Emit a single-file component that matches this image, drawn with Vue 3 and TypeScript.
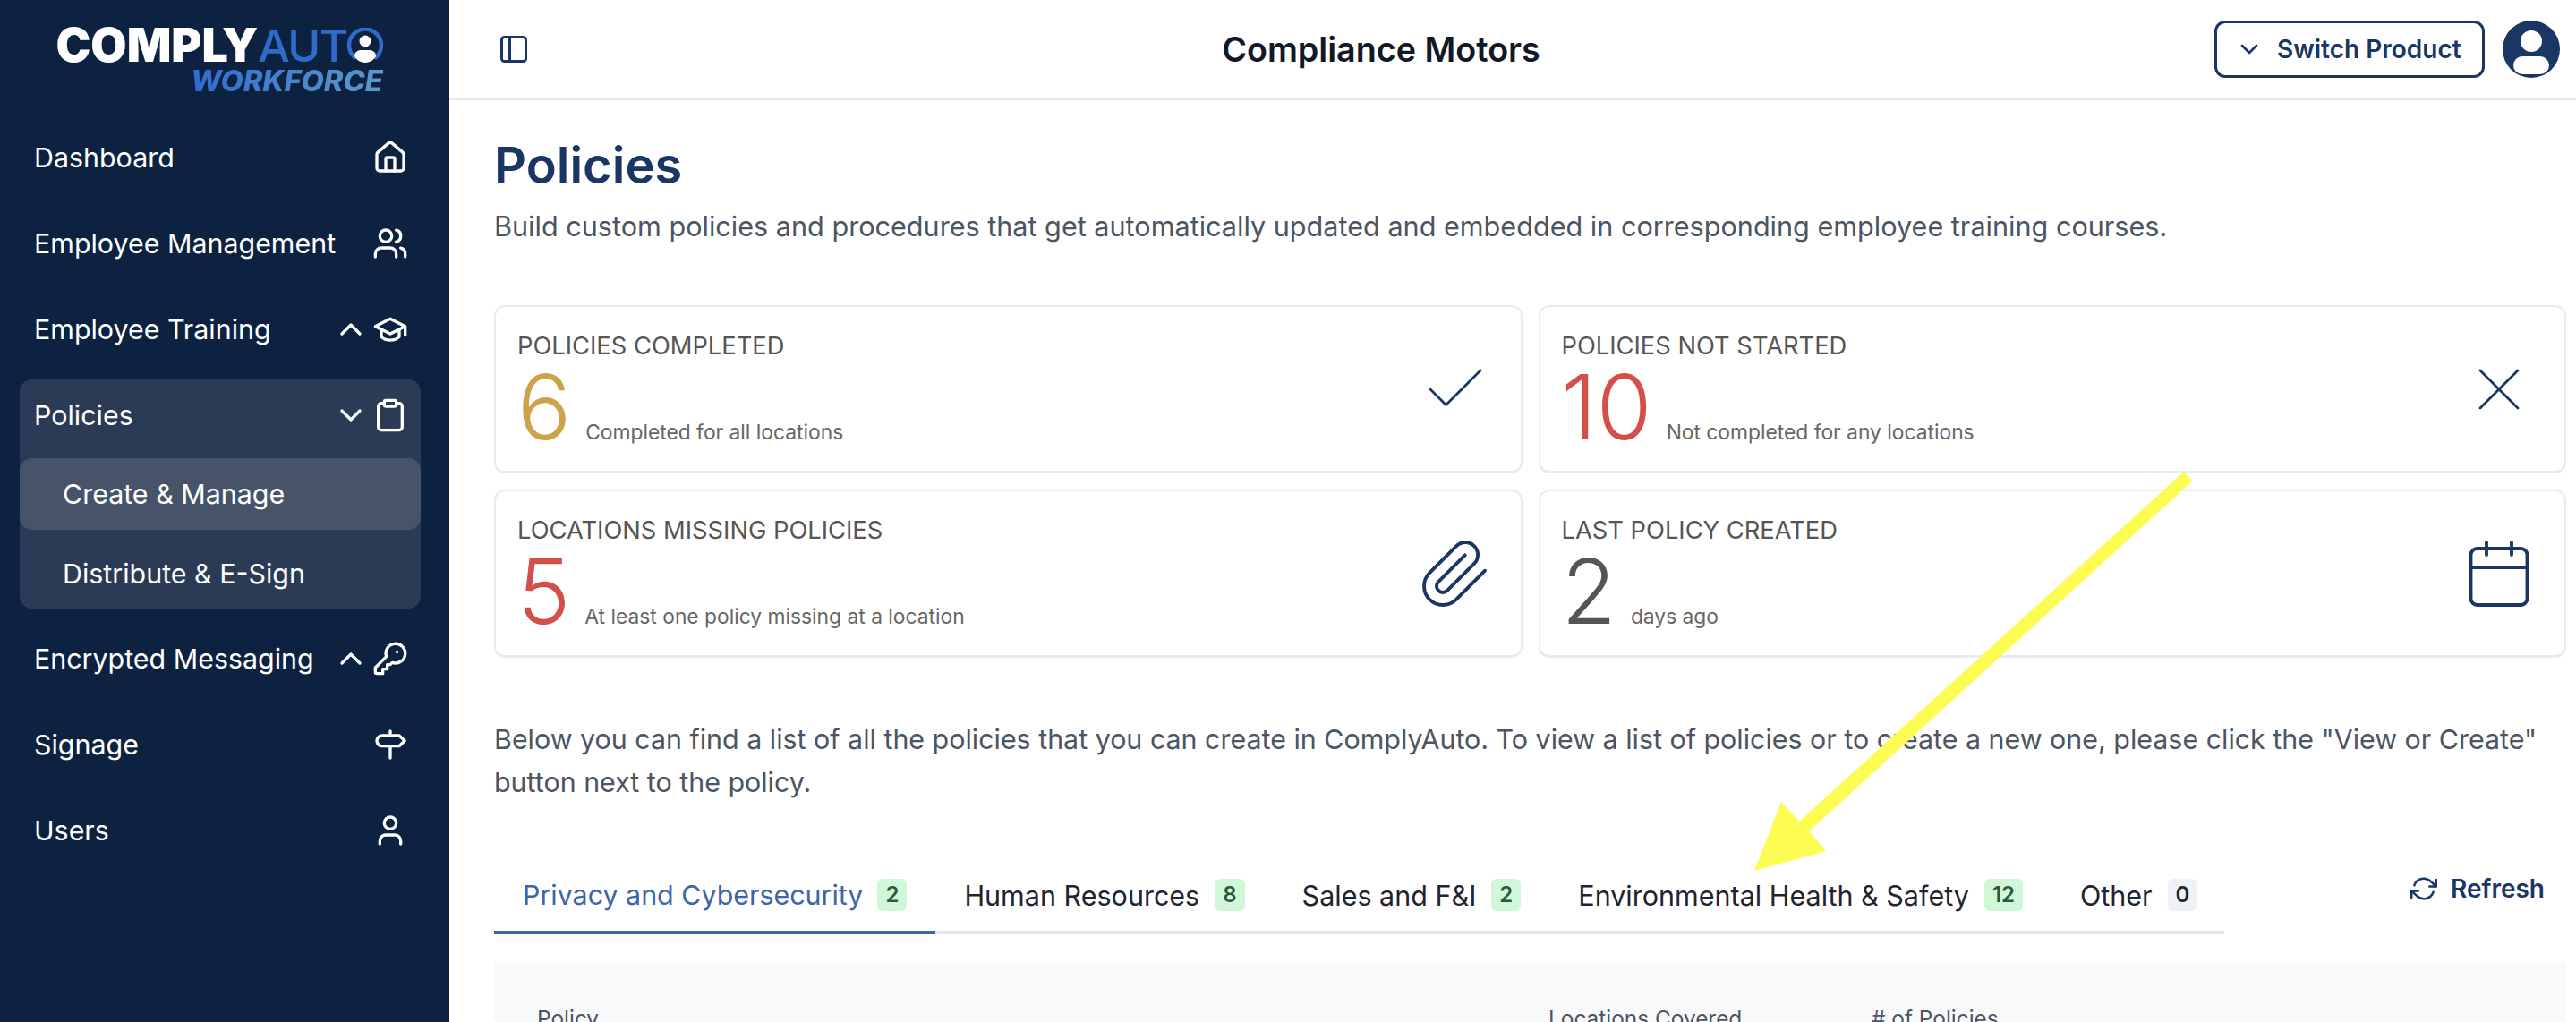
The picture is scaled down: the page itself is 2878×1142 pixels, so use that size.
<script setup lang="ts">
type NavItem = {
  label: string
  icon: string
  chevron?: 'up' | 'down'
  children?: { label: string; active?: boolean }[]
}

type StatCard = {
  title: string
  value: string
  note: string
  tone: string
  icon: string
  stroke: number
}

const icons: Record<string, string[]> = {
  home: [
    'M15 21v-8a1 1 0 0 0-1-1h-4a1 1 0 0 0-1 1v8',
    'M3 10a2 2 0 0 1 .709-1.528l7-5.999a2 2 0 0 1 2.582 0l7 5.999A2 2 0 0 1 21 10v9a2 2 0 0 1-2 2H5a2 2 0 0 1-2-2z',
  ],
  users: [
    'M16 21v-2a4 4 0 0 0-4-4H6a4 4 0 0 0-4 4v2',
    'M5 7a4 4 0 1 0 8 0a4 4 0 1 0-8 0',
    'M22 21v-2a4 4 0 0 0-3-3.87',
    'M16 3.13a4 4 0 0 1 0 7.75',
  ],
  cap: ['M22 10v6M2 10l10-5 10 5-10 5z', 'M6 12v5c3 3 9 3 12 0v-5'],
  clipboard: [
    'M9 2h6a1 1 0 0 1 1 1v2a1 1 0 0 1-1 1H9a1 1 0 0 1-1-1V3a1 1 0 0 1 1-1z',
    'M16 4h2a2 2 0 0 1 2 2v14a2 2 0 0 1-2 2H6a2 2 0 0 1-2-2V6a2 2 0 0 1 2-2h2',
  ],
  key: ['M2 18v3c0 .6.4 1 1 1h4v-3h3v-3h2l1.4-1.4a6.5 6.5 0 1 0-4-4Z', 'M16.5 7.5h.01'],
  signpost: ['M12 3v3', 'M12 13v8', 'M6.5 6H18l3.7 3.5L18 13H6.5a3.5 3.5 0 0 1 0-7z'],
  user: ['M19 21v-2a4 4 0 0 0-4-4H9a4 4 0 0 0-4 4v2', 'M8 7a4 4 0 1 0 8 0a4 4 0 1 0-8 0'],
  up: ['m18 15-6-6-6 6'],
  down: ['m6 9 6 6 6-6'],
  panel: ['M5 3h14a2 2 0 0 1 2 2v14a2 2 0 0 1-2 2H5a2 2 0 0 1-2-2V5a2 2 0 0 1 2-2z', 'M9 3v18'],
  check: ['M20 6 9 17l-5-5'],
  x: ['M18 6 6 18', 'm6 6 12 12'],
  clip: [
    'm21.44 11.05-9.19 9.19a6 6 0 0 1-8.49-8.49l8.57-8.57A4 4 0 1 1 18 8.84l-8.59 8.57a2 2 0 0 1-2.83-2.83l8.49-8.48',
  ],
  calendar: [
    'M5 4h14a2 2 0 0 1 2 2v14a2 2 0 0 1-2 2H5a2 2 0 0 1-2-2V6a2 2 0 0 1 2-2z',
    'M8 2v4',
    'M16 2v4',
    'M3 10h18',
  ],
  refresh: [
    'M23 4v6h-6',
    'M1 20v-6h6',
    'M3.51 9a9 9 0 0 1 14.85-3.36L23 10',
    'M1 14l4.64 4.36A9 9 0 0 0 20.49 15',
  ],
}

const navTop: NavItem[] = [
  { label: 'Dashboard', icon: 'home' },
  { label: 'Employee Management', icon: 'users' },
  { label: 'Employee Training', icon: 'cap', chevron: 'up' },
]

const navGroup: NavItem = {
  label: 'Policies',
  icon: 'clipboard',
  chevron: 'down',
  children: [{ label: 'Create & Manage', active: true }, { label: 'Distribute & E-Sign' }],
}

const navBottom: NavItem[] = [
  { label: 'Encrypted Messaging', icon: 'key', chevron: 'up' },
  { label: 'Signage', icon: 'signpost' },
  { label: 'Users', icon: 'user' },
]

const cards: StatCard[] = [
  { title: 'POLICIES COMPLETED', value: '6', note: 'Completed for all locations', tone: 'gold', icon: 'check', stroke: 0.8 },
  { title: 'POLICIES NOT STARTED', value: '10', note: 'Not completed for any locations', tone: 'red', icon: 'x', stroke: 0.8 },
  { title: 'LOCATIONS MISSING POLICIES', value: '5', note: 'At least one policy missing at a location', tone: 'red', icon: 'clip', stroke: 1.1 },
  { title: 'LAST POLICY CREATED', value: '2', note: 'days ago', tone: 'grey', icon: 'calendar', stroke: 1.1 },
]

const tabs = [
  { label: 'Privacy and Cybersecurity', count: 2, active: true },
  { label: 'Human Resources', count: 8 },
  { label: 'Sales and F&I', count: 2 },
  { label: 'Environmental Health & Safety', count: 12 },
  { label: 'Other', count: 0 },
]
</script>

<template>
  <div class="page">
    <aside class="sidebar">
      <div class="logo">
        <div class="logo-top">
          <span class="logo-comply">COMPLY</span><span class="logo-auto">AUT</span>
          <svg class="logo-o" viewBox="0 0 40 40">
            <path d="M8 33A18 18 0 1 1 32 33" fill="none" stroke="#2f6bc9" stroke-width="4.5" />
            <circle cx="20" cy="15" r="6.5" fill="#fff" />
            <path d="M8 32c0-5 4-7 7-7h10c3 0 7 2 7 7-3 5-8 7-12 7s-9-2-12-7z" fill="#fff" />
          </svg>
        </div>
        <div class="logo-sub">WORKFORCE</div>
      </div>

      <nav class="nav">
        <a v-for="item in navTop" :key="item.label" class="nav-row">
          <span class="nav-label">{{ item.label }}</span>
          <svg v-if="item.chevron" class="nav-chevron" viewBox="0 0 24 24">
            <path v-for="d in icons[item.chevron]" :key="d" :d="d" />
          </svg>
          <svg class="nav-icon" viewBox="0 0 24 24">
            <path v-for="d in icons[item.icon]" :key="d" :d="d" />
          </svg>
        </a>

        <div class="nav-group">
          <a class="nav-row nav-row-group">
            <span class="nav-label">{{ navGroup.label }}</span>
            <svg class="nav-chevron" viewBox="0 0 24 24">
              <path v-for="d in icons.down" :key="d" :d="d" />
            </svg>
            <svg class="nav-icon" viewBox="0 0 24 24">
              <path v-for="d in icons[navGroup.icon]" :key="d" :d="d" />
            </svg>
          </a>
          <a
            v-for="child in navGroup.children"
            :key="child.label"
            class="nav-child"
            :class="{ active: child.active }"
          >
            {{ child.label }}
          </a>
        </div>

        <a v-for="item in navBottom" :key="item.label" class="nav-row">
          <span class="nav-label">{{ item.label }}</span>
          <svg v-if="item.chevron" class="nav-chevron" viewBox="0 0 24 24">
            <path v-for="d in icons[item.chevron]" :key="d" :d="d" />
          </svg>
          <svg class="nav-icon" viewBox="0 0 24 24">
            <path v-for="d in icons[item.icon]" :key="d" :d="d" />
          </svg>
        </a>
      </nav>
    </aside>

    <div class="main">
      <header class="topbar">
        <svg class="panel-icon" viewBox="0 0 24 24">
          <path v-for="d in icons.panel" :key="d" :d="d" />
        </svg>
        <div class="company">Compliance Motors</div>
        <button class="switch-btn">
          <svg viewBox="0 0 24 24">
            <path v-for="d in icons.down" :key="d" :d="d" />
          </svg>
          Switch Product
        </button>
        <svg class="avatar" viewBox="0 0 64 64">
          <circle cx="32" cy="32" r="32" fill="#1a3664" />
          <circle cx="32" cy="23" r="12" fill="#fff" />
          <rect x="12" y="40" width="40" height="20" rx="10" fill="#fff" />
        </svg>
      </header>

      <section class="content">
        <h1>Policies</h1>
        <p class="lead">
          Build custom policies and procedures that get automatically updated and embedded in corresponding employee
          training courses.
        </p>

        <div class="cards">
          <div v-for="card in cards" :key="card.title" class="card">
            <div class="card-text">
              <div class="card-title">{{ card.title }}</div>
              <div class="card-figure">
                <span class="card-value" :class="card.tone">{{ card.value }}</span>
                <span class="card-note">{{ card.note }}</span>
              </div>
            </div>
            <svg class="card-icon" viewBox="0 0 24 24" :style="{ strokeWidth: card.stroke }">
              <path v-for="d in icons[card.icon]" :key="d" :d="d" />
            </svg>
          </div>
        </div>

        <p class="intro">
          Below you can find a list of all the policies that you can create in ComplyAuto. To view a list of policies
          or to create a new one, please click the "View or Create" button next to the policy.
        </p>

        <div class="tabs-row">
          <div class="tabs">
            <div v-for="tab in tabs" :key="tab.label" class="tab" :class="{ active: tab.active }">
              <span>{{ tab.label }}</span>
              <span class="badge" :class="{ empty: tab.count === 0 }">{{ tab.count }}</span>
            </div>
          </div>
          <button class="refresh">
            <svg viewBox="0 0 24 24">
              <path v-for="d in icons.refresh" :key="d" :d="d" />
            </svg>
            Refresh
          </button>
        </div>

        <div class="table-head">
          <span>Policy</span>
          <span>Locations Covered</span>
          <span># of Policies</span>
        </div>
      </section>
    </div>

    <svg class="annotation" viewBox="0 0 2878 1142">
      <polygon points="2440,527 2450,537 2021,929 2040,951 1960,973 1990,896 2010,918" fill="#fdfc52" />
    </svg>
  </div>
</template>

<style>
html,
body {
  margin: 0;
  background: #fff;
}
</style>

<style scoped>
.page {
  position: relative;
  display: flex;
  width: 2878px;
  height: 1142px;
  overflow: hidden;
  font-family: Inter, "Liberation Sans", sans-serif;
  color: #1f2937;
  background: #fff;
}

svg {
  fill: none;
  stroke: currentColor;
  stroke-width: 2;
  stroke-linecap: round;
  stroke-linejoin: round;
}

.sidebar {
  flex: 0 0 502px;
  background: #0d2140;
  color: #fff;
}

.logo {
  display: flex;
  flex-direction: column;
  align-items: flex-end;
  width: 364px;
  height: 128px;
  margin-left: 64px;
  padding-top: 30px;
  box-sizing: border-box;
}

.logo-top {
  display: flex;
  align-items: center;
  height: 42px;
}

.logo-comply {
  font-size: 52px;
  font-weight: 900;
  line-height: 42px;
}

.logo-auto {
  font-size: 50px;
  font-weight: 500;
  letter-spacing: -1.5px;
  line-height: 42px;
  color: #2f6bc9;
}

.logo-o {
  width: 40px;
  height: 40px;
  stroke: none;
}

.logo-sub {
  margin-top: 3px;
  font-size: 32.7px;
  font-weight: 800;
  font-style: italic;
  line-height: 30px;
  color: transparent;
  background: linear-gradient(90deg, #2f6bd0, #5e9ac8);
  -webkit-background-clip: text;
  background-clip: text;
}

.nav {
  display: flex;
  flex-direction: column;
  padding: 0 32px 0 22px;
}

.nav-row {
  display: flex;
  align-items: center;
  height: 96px;
  padding: 0 14px 0 16px;
  box-sizing: border-box;
}

.nav-row-group {
  height: 88px;
  padding-bottom: 8px;
}

.nav-label {
  flex: 1;
  font-size: 30.4px;
  white-space: nowrap;
}

.nav-chevron,
.nav-icon {
  flex: none;
  width: 40px;
  height: 40px;
}

.nav-icon {
  margin-left: 4px;
}

.nav-group {
  margin: 8px 0;
  border-radius: 14px;
  background: #2b3b55;
}

.nav-child {
  display: flex;
  align-items: center;
  height: 88px;
  padding: 10px 0 0 48px;
  box-sizing: border-box;
  font-size: 30.4px;
  border-radius: 14px;
}

.nav-child.active {
  height: 80px;
  padding-top: 0;
  background: #465369;
}

.main {
  flex: 1;
  min-width: 0;
}

.topbar {
  display: flex;
  align-items: center;
  height: 110px;
  padding: 0 18px 0 54px;
  border-bottom: 2px solid #e5e9ef;
}

.panel-icon {
  width: 36px;
  height: 36px;
  color: #1a3664;
}

.company {
  flex: 1;
  padding-left: 20px;
  text-align: center;
  font-size: 37.7px;
  font-weight: 600;
  color: #111827;
}

.switch-btn {
  display: flex;
  align-items: center;
  gap: 15px;
  width: 302px;
  height: 64px;
  padding: 0 0 0 20px;
  box-sizing: border-box;
  border: 3px solid #1a3664;
  border-radius: 12px;
  background: #fff;
  font-family: inherit;
  font-size: 28px;
  font-weight: 600;
  color: #1a3664;
}

.switch-btn svg {
  width: 32px;
  height: 32px;
}

.avatar {
  width: 64px;
  height: 64px;
  margin-left: 20px;
  stroke: none;
}

.content {
  padding: 40px 11px 0 50px;
}

h1 {
  margin: 0;
  font-size: 56px;
  font-weight: 600;
  line-height: 66px;
  color: #1a3664;
}

.lead {
  margin: 11px 0 0;
  font-size: 30.6px;
  line-height: 48px;
  color: #4b5563;
  white-space: nowrap;
}

.cards {
  display: grid;
  grid-template-columns: 1fr 1fr;
  gap: 18px;
  margin-top: 64px;
}

.card {
  display: flex;
  align-items: center;
  justify-content: space-between;
  height: 188px;
  padding: 0 31px 0 24px;
  box-sizing: border-box;
  border: 2px solid #e8ebf1;
  border-bottom-width: 3px;
  border-radius: 12px;
}

.card-text {
  padding-top: 2px;
}

.card-title {
  font-size: 27.3px;
  line-height: 34px;
  color: #555;
}

.card-figure {
  display: flex;
  align-items: baseline;
  gap: 16px;
  height: 92px;
  margin-top: 5px;
}

.card-value {
  font-size: 100px;
  font-weight: 300;
  line-height: 92px;
}

.card-value.gold {
  color: #cda349;
}

.card-value.red {
  color: #d44f49;
}

.card-value.grey {
  color: #555;
}

.card-note {
  font-size: 22.8px;
  color: #666;
}

.card-icon {
  flex: none;
  width: 84px;
  height: 84px;
  color: #1a3664;
}

.intro {
  margin: 67px 0 0;
  font-size: 30.4px;
  line-height: 48px;
  color: #4b5563;
}

.tabs-row {
  display: flex;
  justify-content: space-between;
  align-items: flex-start;
  margin-top: 62px;
  padding-right: 24px;
}

.tabs {
  display: flex;
  width: 1933px;
  border-bottom: 4px solid #e2e6ef;
}

.tab {
  display: flex;
  align-items: center;
  gap: 17px;
  height: 80px;
  margin-bottom: -4px;
  padding: 0 32px;
  font-size: 30.5px;
  color: #1f2430;
  white-space: nowrap;
  border-bottom: 4px solid transparent;
}

.tab.active {
  gap: 16px;
  font-size: 30.4px;
  color: #3d65a8;
  border-bottom-color: #3d65a8;
}

.badge {
  min-width: 32px;
  height: 36px;
  padding: 0 9px;
  box-sizing: border-box;
  border-radius: 6px;
  background: #d1f7d9;
  font-size: 24px;
  font-weight: 600;
  line-height: 36px;
  text-align: center;
  color: #2a5a3c;
}

.badge.empty {
  background: #eef1f6;
  color: #1f2430;
}

.refresh {
  display: flex;
  align-items: center;
  gap: 15px;
  margin-top: 16px;
  padding: 0;
  border: 0;
  background: none;
  font-family: inherit;
  font-size: 28px;
  font-weight: 600;
  color: #1a3664;
}

.refresh svg {
  width: 30px;
  height: 30px;
}

.table-head {
  display: grid;
  grid-template-columns: 1130px 361px 1fr;
  height: 120px;
  margin-top: 32px;
  padding: 47px 0 0 48px;
  box-sizing: border-box;
  background: #f8f9fb;
  font-size: 24.4px;
  color: #4b5563;
}

.annotation {
  position: absolute;
  inset: 0;
  width: 2878px;
  height: 1142px;
  stroke: none;
  pointer-events: none;
}
</style>
